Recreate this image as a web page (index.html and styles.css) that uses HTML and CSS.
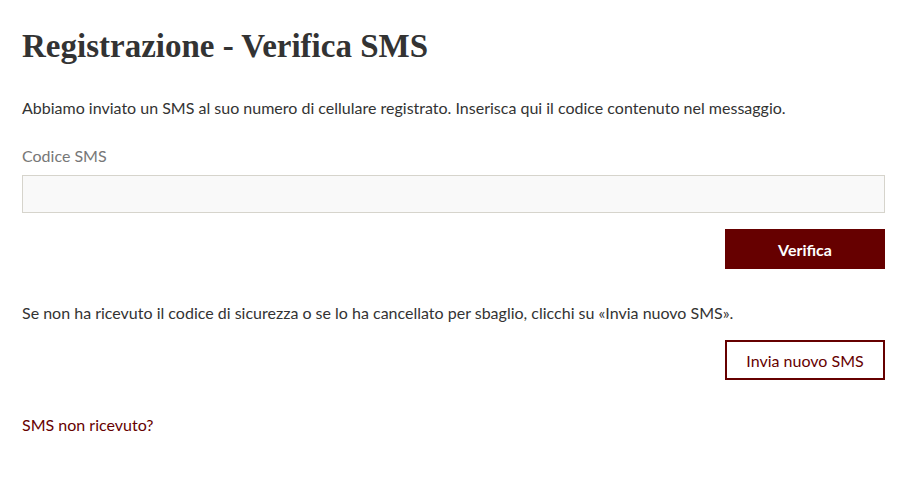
FILE: index.html
```html
<!DOCTYPE html>
<html lang="it">
<head>
    <meta charset="UTF-8">
    <meta name="viewport" content="width=device-width, initial-scale=1.0">
    <title>Registrazione - Verifica SMS</title>
    <link rel="stylesheet" href="styles.css">
</head>
<body>
    <div class="page">
        <h1>Registrazione - Verifica SMS</h1>
        <p class="intro">Abbiamo inviato un SMS al suo numero di cellulare registrato. Inserisca qui il codice contenuto nel messaggio.</p>

        <label for="code">Codice SMS</label>
        <input type="text" id="code">
        <div class="actions">
            <button class="btn btn-primary">Verifica</button>
        </div>

        <p class="resend-info">Se non ha ricevuto il codice di sicurezza o se lo ha cancellato per sbaglio, clicchi su «Invia nuovo SMS».</p>
        <div class="actions">
            <button class="btn btn-outline">Invia nuovo SMS</button>
        </div>

        <a href="#" class="help-link">SMS non ricevuto?</a>
    </div>
</body>
</html>
```

FILE: styles.css
```css
body {
    font-family: Lato, "Open Sans", sans-serif;
    font-size: 16px;
    color: #333;
    background-color: #fff;
    margin: 0;
}

.page {
    padding: 26px 22px;
}

h1 {
    font-family: "Liberation Serif", serif;
    font-size: 33px;
    font-weight: bold;
    margin: 0 0 31px;
    line-height: 40px;
}

.intro {
    margin: 0 0 26px;
    line-height: 22px;
}

label {
    display: block;
    color: #777;
    line-height: 22px;
    margin-bottom: 8px;
}

input[type="text"] {
    display: block;
    box-sizing: border-box;
    width: 100%;
    height: 38px;
    background-color: #f9f9f9;
    border: 1px solid #d6d4cc;
    border-radius: 0;
    padding: 0 10px;
    font-size: 16px;
}

.actions {
    display: flex;
    justify-content: flex-end;
    margin-top: 16px;
}

.btn {
    font-family: Lato, sans-serif;
    font-size: 16px;
    width: 160px;
    height: 40px;
    cursor: pointer;
    border-radius: 0;
}

.btn-primary {
    background-color: #660000;
    color: #fff;
    border: none;
    font-weight: bold;
}

.btn-outline {
    background-color: #fff;
    color: #660000;
    border: 2px solid #660000;
}

.resend-info {
    margin: 33px 0 0;
    line-height: 22px;
}

.help-link {
    display: inline-block;
    margin-top: 34px;
    color: #660000;
    text-decoration: none;
    line-height: 22px;
}
```
